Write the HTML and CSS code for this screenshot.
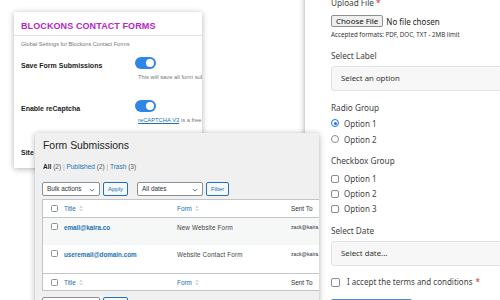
FILE: index.html
```html
<!DOCTYPE html>
<html>
<head>
<meta charset="utf-8">
<link rel="stylesheet" href="styles.css">
</head>
<body>
<div class="canvas">

  <section class="form-panel">
    <div class="f-label">Upload File <span class="req">*</span></div>
    <div class="file-row"><span class="file-btn">Choose File</span><span class="file-none">No file chosen</span></div>
    <div class="f-help">Accepted formats: PDF, DOC, TXT - 2MB limit</div>
    <div class="f-label l-select">Select Label</div>
    <div class="f-input">Select an option</div>
    <div class="f-label l-radio">Radio Group</div>
    <div class="opt r-first"><span class="radio on"></span>Option 1</div>
    <div class="opt"><span class="radio"></span>Option 2</div>
    <div class="f-label l-check">Checkbox Group</div>
    <div class="opt2 c-first"><span class="cbox"></span>Option 1</div>
    <div class="opt2"><span class="cbox"></span>Option 2</div>
    <div class="opt2"><span class="cbox"></span>Option 3</div>
    <div class="f-label l-date">Select Date</div>
    <div class="f-input">Select date...</div>
    <div class="terms"><span class="cbox"></span>I accept the terms and conditions <span class="req">*</span></div>
    <div class="submit"></div>
  </section>

  <section class="settings">
    <div class="s-head">Blockons Contact Forms</div>
    <div class="s-desc">Global Settings for Blockons Contact Forms</div>
    <div class="s-row r1">
      <div class="s-name">Save Form Submissions</div>
      <div class="s-ctl">
        <span class="toggle"></span>
        <div class="s-note">This will save all form submissions</div>
      </div>
    </div>
    <div class="s-row r2">
      <div class="s-name">Enable reCaptcha</div>
      <div class="s-ctl">
        <span class="toggle"></span>
        <div class="s-note"><a class="s-link">reCAPTCHA V3</a> is a free service</div>
      </div>
    </div>
    <div class="s-row r3">
      <div class="s-name">Site Key</div>
    </div>
  </section>

  <section class="subs">
    <h1 class="subs-title">Form Submissions</h1>
    <div class="views"><b>All</b> <span class="cnt">(2)</span> <span class="sep">|</span> <a>Published</a> <span class="cnt">(2)</span> <span class="sep">|</span> <a>Trash</a> <span class="cnt">(3)</span></div>
    <div class="tablenav">
      <span class="sel w-bulk">Bulk actions<svg class="chev" viewBox="0 0 8 5"><path d="M1 1l3 3 3-3" fill="none" stroke="#50575e" stroke-width="1.1"/></svg></span>
      <span class="btn">Apply</span>
      <span class="sel w-date">All dates<svg class="chev" viewBox="0 0 8 5"><path d="M1 1l3 3 3-3" fill="none" stroke="#50575e" stroke-width="1.1"/></svg></span>
      <span class="btn">Filter</span>
    </div>
    <div class="table">
      <div class="tr th">
        <span class="c-cb"><span class="wcb"></span></span>
        <span class="c-title"><a>Title</a><svg class="sort" viewBox="0 0 5 8"><path d="M1 3l1.5-1.5L4 3M1 5l1.5 1.5L4 5" fill="none" stroke="#8c8f94" stroke-width=".9"/></svg></span>
        <span class="c-form"><a>Form</a><svg class="sort" viewBox="0 0 5 8"><path d="M1 3l1.5-1.5L4 3M1 5l1.5 1.5L4 5" fill="none" stroke="#8c8f94" stroke-width=".9"/></svg></span>
        <span class="c-to">Sent To</span>
      </div>
      <div class="tr td alt">
        <span class="c-cb"><span class="wcb"></span></span>
        <span class="c-title"><a class="strong">email@kaira.co</a></span>
        <span class="c-form">New Website Form</span>
        <span class="c-to sm">zack@kaira.co</span>
      </div>
      <div class="tr td tall">
        <span class="c-cb"><span class="wcb"></span></span>
        <span class="c-title"><a class="strong">useremail@domain.com</a></span>
        <span class="c-form">Website Contact Form</span>
        <span class="c-to sm">zack@kaira.co</span>
      </div>
      <div class="tr th tf">
        <span class="c-cb"><span class="wcb"></span></span>
        <span class="c-title"><a>Title</a><svg class="sort" viewBox="0 0 5 8"><path d="M1 3l1.5-1.5L4 3M1 5l1.5 1.5L4 5" fill="none" stroke="#8c8f94" stroke-width=".9"/></svg></span>
        <span class="c-form"><a>Form</a><svg class="sort" viewBox="0 0 5 8"><path d="M1 3l1.5-1.5L4 3M1 5l1.5 1.5L4 5" fill="none" stroke="#8c8f94" stroke-width=".9"/></svg></span>
        <span class="c-to">Sent To</span>
      </div>
    </div>
    <div class="tablenav bottom">
      <span class="sel w-bulk">Bulk actions</span>
      <span class="btn">Apply</span>
    </div>
  </section>

</div>
</body>
</html>
```

FILE: styles.css
```css
* { box-sizing: border-box; }
html, body { margin: 0; padding: 0; background: #fff; }
body { width: 500px; height: 300px; overflow: hidden; }
.canvas { position: relative; width: 500px; height: 300px; overflow: hidden; }

/* ---------- right form window ---------- */
.form-panel {
  position: absolute; left: 305px; top: -10px;
  width: 230px; height: 340px;
  background: #fff;
  box-shadow: -1px 0 5px rgba(0,0,0,.28);
  padding: 7px 0 0 26px;
  font-family: "Noto Sans", "Open Sans", sans-serif;
  font-size: 8px; color: #3f3f3f;
}
.f-label { height: 12px; line-height: 12px; font-size: 8.2px; }
.req { color: #e0282f; }
.file-row { margin-top: 6px; height: 12px; display: flex; align-items: center; gap: 3px; font-size: 8px; }
.file-btn {
  height: 12px; line-height: 10px; padding: 0 4px;
  border: 1px solid #8f8f8f; border-radius: 2px; background: #efefef; color: #111;
  font-size: 7.9px;
}
.file-none { color: #222; font-size: 8px; }
.f-help { margin-top: 4px; height: 8px; line-height: 8px; font-size: 6.2px; color: #333; }
.l-select { margin-top: 11px; }
.f-input {
  margin-top: 4px; height: 25px; width: 200px;
  background: #f7f7f7; border: 1px solid #e3e3e3; border-radius: 3px;
  padding-left: 9px; line-height: 23px; font-size: 7.8px; color: #333;
}
.l-radio { margin-top: 11px; }
.opt { height: 16px; display: flex; align-items: center; gap: 5px; font-size: 8px; }
.r-first { margin-top: 1px; }
.radio { width: 8px; height: 8px; border: 1px solid #8a8a8a; border-radius: 50%; position: relative; }
.radio.on { border-color: #1a73e8; }
.radio.on::after { content: ""; position: absolute; left: 1.5px; top: 1.5px; width: 3px; height: 3px; border-radius: 50%; background: #1a73e8; }
.l-check { margin-top: 8px; }
.opt2 { height: 15px; display: flex; align-items: center; gap: 5px; font-size: 8px; }
.c-first { margin-top: 4px; }
.cbox { width: 8px; height: 8px; border: 1px solid #8a8a8a; border-radius: 2px; }
.l-date { margin-top: 9px; }
.terms { margin-top: 8px; height: 14px; display: flex; align-items: center; gap: 7px; font-size: 8px; }
.terms .cbox { width: 9px; height: 9px; margin-top: 2px; }
.terms .req { margin-left: -4px; }
.submit { margin-top: 11px; width: 81px; height: 20px; background: #4a8fd4; border-radius: 2px; }

/* ---------- settings window ---------- */
.settings {
  position: absolute; left: 14px; top: 12px;
  width: 188px; height: 156px;
  background: #fff;
  box-shadow: 0 1px 6px rgba(0,0,0,.3);
  font-family: "Liberation Sans", Arial, sans-serif;
  overflow: hidden;
}
.s-head {
  height: 24px; line-height: 28px; padding-left: 7px;
  border-bottom: 1px solid #e2e2e2;
  text-transform: uppercase; font-weight: bold; font-size: 9px; color: #b626c5;
  letter-spacing: .1px;
}
.s-desc { padding-left: 7px; margin-top: 5px; font-size: 5.6px; color: #777; }
.s-row { display: flex; padding-left: 7px; }
.r1 { margin-top: 10px; }
.r2 { margin-top: 20px; }
.r3 { margin-top: 21px; }
.s-name { flex: none; width: 114px; font-weight: bold; font-size: 7px; color: #222; padding-top: 5px; }
.s-ctl { display: flex; flex-direction: column; align-items: flex-start; }
.toggle {
  flex: none; width: 21px; height: 12px; border-radius: 6px; background: #2f86e6; position: relative;
}
.toggle::after {
  content: ""; position: absolute; right: 2px; top: 2px; width: 8px; height: 8px; border-radius: 50%; background: #fff;
}
.s-note { margin-top: 5px; margin-left: 3px; font-size: 5.8px; color: #777; white-space: nowrap; }
.s-link { color: #2271b1; text-decoration: underline; }

/* ---------- submissions window ---------- */
.subs {
  position: absolute; left: 35px; top: 133px;
  width: 284px; height: 180px;
  background: #f0f0f1;
  box-shadow: 0 1px 6px rgba(0,0,0,.32);
  font-family: "Liberation Sans", Arial, sans-serif;
  padding: 0 0 0 7px;
  overflow: hidden;
}
.subs-title { margin: 6px 0 0 1px; font-weight: normal; font-size: 10.4px; line-height: 14px; color: #1d2327; }
.views { margin-top: 10px; margin-left: 1px; font-size: 6.5px; color: #50575e; }
.views b { color: #1d2327; }
.views a { color: #2271b1; }
.views .sep { color: #a7aaad; }
.tablenav { margin-top: 12px; display: flex; align-items: center; gap: 3px; height: 14px; }
.sel {
  flex: none;
  height: 14px; border: 1px solid #8c8f94; border-radius: 2px; background: #fff;
  font-size: 6.4px; color: #2c3338; line-height: 12px; padding-left: 4px; position: relative;
}
.chev { position: absolute; right: 4px; top: 4.5px; width: 6px; height: 4px; }
.w-bulk { width: 58px; }
.w-date { width: 66px; margin-left: 6px; }
.btn {
  flex: none;
  height: 14px; border: 1px solid #2271b1; border-radius: 2px; background: #f6f7f7;
  font-size: 6px; color: #2271b1; line-height: 12px; padding: 0 4px;
}
.table {
  margin-top: 3px; margin-left: 0; width: 320px;
  background: #fff; border: 1px solid #c3c4c7;
}
.tr { display: flex; align-items: center; }
.th { height: 18px; border-bottom: 1px solid #c3c4c7; font-size: 6.4px; }
.tf { border-bottom: 0; border-top: 1px solid #c3c4c7; height: 17px; }
.td { height: 27px; align-items: flex-start; padding-top: 6px; font-size: 6.3px; color: #3c434a; }
.td.tall { height: 28px; }
.td.alt { background: #f6f7f7; }
.c-cb { flex: none; width: 20px; display: flex; justify-content: center; padding-left: 3px; }
.wcb { width: 7px; height: 7px; border: 1px solid #8c8f94; border-radius: 1.5px; background: #fff; }
.td .c-cb { margin-top: -1px; }
.c-title { flex: none; width: 114px; padding-left: 1px; display: flex; align-items: center; }
.c-form { flex: none; width: 114px; display: flex; align-items: center; letter-spacing: .15px; }
.c-to { flex: none; color: #2c3338; }
.c-to.sm { font-size: 5.2px; }
.th a { color: #2271b1; letter-spacing: 0; }
.sort { width: 4px; height: 7px; margin-left: 3px; }
.strong { color: #2271b1; font-weight: bold; font-size: 6.3px; letter-spacing: 0; }
.tablenav.bottom { margin-top: 6px; }
```
